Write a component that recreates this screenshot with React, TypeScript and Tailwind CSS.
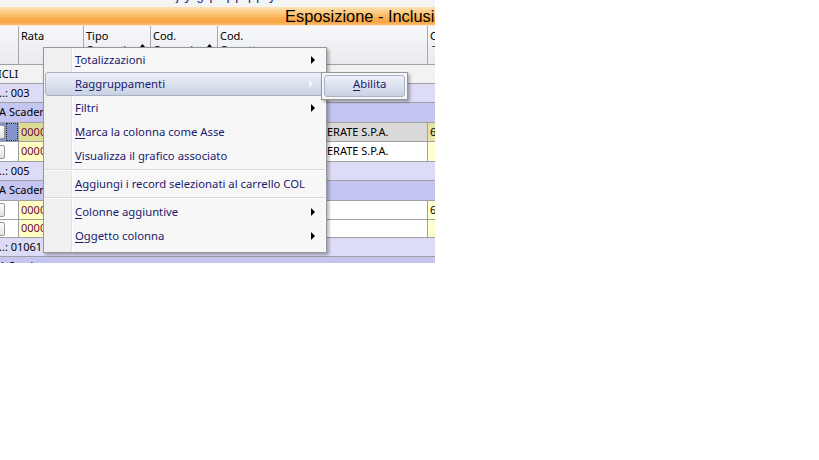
import React from "react";

function Arrow({ light }: { light?: boolean }) {
  return (
    <svg width="5" height="8" viewBox="0 0 5 8" className="absolute right-[10px] top-1/2 -translate-y-1/2">
      <polygon points="0,0 4,4 0,8" fill={light ? "#f4f6fa" : "#000000"} />
    </svg>
  );
}

function MenuItem({ first, rest, arrow, active }: { first: string; rest: string; arrow?: boolean; active?: boolean }) {
  if (active) {
    return (
      <div className="relative h-[24px] mx-[1px] flex items-center rounded-[3px] border border-[#aab3c6] bg-[linear-gradient(to_bottom,#eef1f8_0%,#dde3ef_45%,#c9d2e3_100%)] pl-[29px]">
        <span><u className="underline-offset-2">{first}</u>{rest}</span>
        {arrow && <Arrow light />}
      </div>
    );
  }
  return (
    <div className="relative h-[24px] flex items-center pl-[31px]">
      <span><u className="underline-offset-2">{first}</u>{rest}</span>
      {arrow && <Arrow />}
    </div>
  );
}

function Sep() {
  return (
    <div className="h-[4px] flex flex-col justify-center px-[1px]">
      <div className="h-[1px] bg-[#d5d8dd]" />
      <div className="h-[1px] bg-white" />
    </div>
  );
}

function RowBtn() {
  return (
    <div className="shrink-0 -ml-[10px] w-[15px] h-[14px] rounded-[2px] border border-[#9a9a9a] bg-[linear-gradient(to_bottom,#fbfbfb,#e3e3e3)]" />
  );
}

function DataRow({ h, selected, name, six }: { h: string; selected?: boolean; name?: string; six?: boolean }) {
  return (
    <div className={`${h} flex border-b border-[#a0a0a0] ${selected ? "bg-[#d9d9d9]" : "bg-white"}`}>
      <div className={`w-[19px] shrink-0 flex items-center border-r border-[#a0a0a0] ${selected ? "bg-[#8393cb]" : "bg-white"}`}>
        <RowBtn />
        {selected && <div className="ml-[1px] h-full flex-1 border border-dotted border-[#333]" />}
      </div>
      <div className={`w-[65px] shrink-0 flex items-center pl-[2px] border-r border-[#a0a0a0] text-[#6a0a3a] ${selected ? "bg-[#dedb96]" : "bg-[#ffffc4]"}`}>
        0000000
      </div>
      <div className="w-[67px] shrink-0 border-r border-[#a0a0a0]" />
      <div className="w-[67px] shrink-0 border-r border-[#a0a0a0]" />
      <div className="w-[210px] shrink-0 flex items-center pl-[109px] border-r border-[#a0a0a0] whitespace-nowrap overflow-hidden">
        {name}
      </div>
      <div className={`flex-1 flex items-center pl-[2px] ${selected ? "bg-[#e6e3a4]" : "bg-[#ffffd2]"}`}>{six ? "6" : ""}</div>
    </div>
  );
}

function GroupRow({ h, dark, text }: { h: string; dark?: boolean; text: string }) {
  return (
    <div className={`${h} flex items-center border-b border-[#a0a0a0] whitespace-nowrap ${dark ? "bg-[#c5c5f1]" : "bg-[#dcdcf6]"}`}>
      <span className="-ml-[1px]">{text}</span>
    </div>
  );
}

function HeadCell({ w, l1, l2, sort, border = true }: { w: string; l1: string; l2: string; sort?: boolean; border?: boolean }) {
  return (
    <div className={`${w} shrink-0 h-full ${border ? "border-r border-[#a5a7ab]" : ""} pl-[2px] pt-[3px]`}>
      <div className="relative h-[18px] overflow-hidden leading-[14px]">
        <div>{l1}</div>
        <div>{l2}</div>
        {sort && (
          <svg width="5" height="6" viewBox="0 0 5 6" className="absolute right-[5px] top-[15px]">
            <polygon points="2.5,0 5,3 2.5,6 0,3" fill="#000" />
          </svg>
        )}
      </div>
    </div>
  );
}

export default function App() {
  return (
    <div className="w-[819px] h-[460px] bg-white">
      <div className="relative w-[435px] h-[263px] overflow-hidden bg-[#f0f0f0] text-[11px] text-black font-['Noto_Sans',sans-serif]">
        {/* top strip with clipped text */}
        <div className="relative h-[7px] overflow-hidden bg-[#f4f4f4]">
          <div className="absolute left-[176px] top-[-14px] whitespace-nowrap text-[13px] text-[#202088] font-['Liberation_Sans',sans-serif] tracking-[1px]">
            j  y      g        p   q    p  pp    y
          </div>
        </div>
        {/* orange title */}
        <div className="h-[19px] border-b border-[#fde6c4] bg-[linear-gradient(to_bottom,#fde2b6_0%,#fccb80_30%,#f9ad4f_65%,#f8a544_85%,#fbc27a_100%)] whitespace-nowrap pl-[285px] text-[16.4px] leading-[18px] font-['Liberation_Sans',sans-serif]">
          Esposizione - Inclusione
        </div>
        {/* header */}
        <div className="h-[39px] flex border-b border-[#a0a0a0] bg-[linear-gradient(to_bottom,#f7f8fa,#e8eaef)] whitespace-nowrap">
          <div className="w-[19px] shrink-0 h-full border-r border-[#a5a7ab]" />
          <HeadCell w="w-[65px]" l1="Rata" l2="" />
          <HeadCell w="w-[67px]" l1="Tipo" l2="Operazione" sort />
          <HeadCell w="w-[67px]" l1="Cod." l2="Operazione" sort />
          <HeadCell w="w-[210px]" l1="Cod." l2="Oggetto" />
          <HeadCell w="flex-1" l1="Cod." l2="Oper" border={false} />
        </div>
        {/* rows */}
        <div className="h-[19px] flex items-center border-b border-[#a0a0a0] bg-[#f2f2f2] whitespace-nowrap">
          <span className="-ml-[2px]">ICLI</span>
        </div>
        <GroupRow h="h-[19px]" text="..: 003" />
        <GroupRow h="h-[20px]" dark text="A Scadere" />
        <DataRow h="h-[19px]" selected name="ERATE S.P.A." six />
        <DataRow h="h-[20px]" name="ERATE S.P.A." />
        <GroupRow h="h-[19px]" text="..: 005" />
        <GroupRow h="h-[20px]" dark text="A Scadere" />
        <DataRow h="h-[19px]" six />
        <DataRow h="h-[18px]" />
        <GroupRow h="h-[19px]" text="..: 01061" />
        <GroupRow h="h-[20px]" dark text="A Scadere" />

        {/* context menu */}
        <div className="absolute left-[43px] top-[47px] w-[284px] h-[206px] border border-[#979797] shadow-[2px_2px_3px_rgba(0,0,0,0.3)] bg-[linear-gradient(to_right,#f0f0f0_0px,#f0f0f0_27px,#e2e3e3_27px,#e2e3e3_28px,#ffffff_28px,#ffffff_29px,#f7f7f7_29px)] text-[11.3px] text-[#1a1a6e] whitespace-nowrap">
          <MenuItem first="T" rest="otalizzazioni" arrow />
          <MenuItem first="R" rest="aggruppamenti" arrow active />
          <MenuItem first="F" rest="iltri" arrow />
          <MenuItem first="M" rest="arca la colonna come Asse" />
          <MenuItem first="V" rest="isualizza il grafico associato" />
          <Sep />
          <MenuItem first="A" rest="ggiungi i record selezionati al carrello COL" />
          <Sep />
          <MenuItem first="C" rest="olonne aggiuntive" arrow />
          <MenuItem first="O" rest="ggetto colonna" arrow />
        </div>

        {/* submenu */}
        <div className="absolute left-[321px] top-[72px] w-[87px] h-[28px] border border-[#979797] bg-[#f7f7f7] shadow-[2px_2px_3px_rgba(0,0,0,0.3)] p-[2px] text-[11.3px] text-[#1a1a6e]">
          <div className="h-full rounded-[3px] border border-[#aab3c6] bg-[linear-gradient(to_bottom,#eef1f8_0%,#dde3ef_45%,#c9d2e3_100%)] flex items-center pl-[28px] pb-[3px]">
            <span><u className="underline-offset-2">A</u>bilita</span>
          </div>
        </div>
      </div>
    </div>
  );
}
